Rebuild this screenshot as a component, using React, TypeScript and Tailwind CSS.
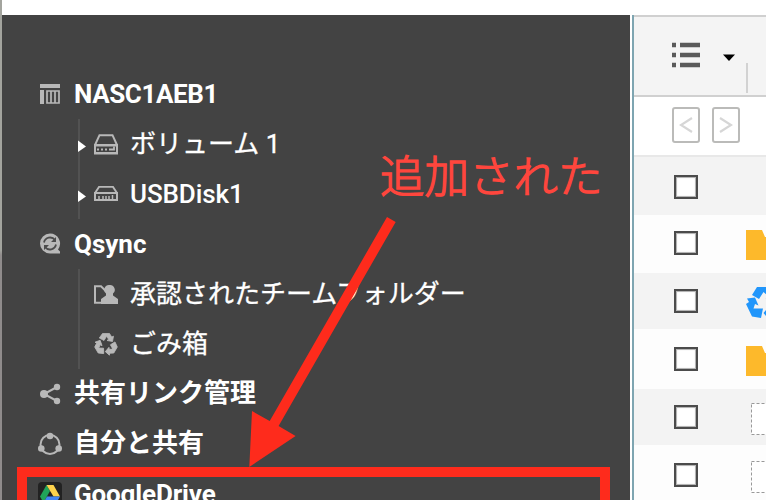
import type { ReactNode } from "react";

const ICON = "#b8b8b8";

function NasIcon() {
  return (
    <svg width="24" height="24" viewBox="0 0 24 24" fill="none">
      <path d="M2 2h20v4H2zM2 8h4v14H2z" fill={ICON} />
      <path d="M9 9h12v12H9zM13 9v12M17 9v12" stroke={ICON} strokeWidth="1.700" />
    </svg>
  );
}

function DriveIcon() {
  return (
    <svg width="24" height="24" viewBox="0 0 24 24" fill="none">
      <path d="M1 13L5.500 3.200h13L23 13" stroke={ICON} strokeWidth="2" />
      <path fillRule="evenodd" d="M0 12h24v10.500H0zM2 14.500v5.500h20v-5.500z" fill={ICON} />
      <path d="M3 17.500h2M7 17.500h2M11 17.500h2M15 17.500h5v-3" stroke={ICON} strokeWidth="1.800" />
    </svg>
  );
}

function UsbIcon() {
  return (
    <svg width="24" height="24" viewBox="0 0 24 24" fill="none">
      <path d="M1 11L5 4.900h14L23 11" stroke={ICON} strokeWidth="1.900" />
      <path d="M1 10.900h22v7.200H1z" stroke={ICON} strokeWidth="2" />
      <path d="M5 17v-3M9 17v-3M12 17v-3M15 17v-3M18.500 17v-4" stroke={ICON} strokeWidth="1.500" />
    </svg>
  );
}

function QsyncIcon() {
  return (
    <svg width="24" height="24" viewBox="0 0 24 24" fill="none">
      <path d="M12 1.500a10 10 0 1 0 0 20h10v-2l-2-2A10 10 0 0 0 12 1.500z" fill={ICON} />
      <path d="M6 10.500a6.200 6.200 0 0 1 11-2.500M18 12.500a6.200 6.200 0 0 1-11 2.500" stroke="#4c4c4c" strokeWidth="1.800" />
      <path d="M18 5v5h-5zM6 18v-5h5z" fill="#4c4c4c" />
    </svg>
  );
}

function TeamIcon() {
  return (
    <svg width="24" height="24" viewBox="0 0 24 24" fill="none">
      <path d="M9 20.700H1V4.200h6l5 5" stroke={ICON} strokeWidth="2" />
      <path d="M15.500 3a4.800 4.800 0 0 1 3.500 8.500v2l5 3.500v5H7v-5l5-3.500v-2A4.800 4.800 0 0 1 15.500 3z" fill={ICON} />
    </svg>
  );
}

function RecycleIcon() {
  return (
    <svg width="24" height="24" viewBox="0 0 24 24" fill={ICON} stroke={ICON} strokeWidth="0.8">
      <path id="recycle-arm" d="M8.500 1.500h7l2.200 3.500 1.800-.8L18.500 9.500 13 8.500l1.600-1.200-2-3L10 8.500 5.300 6z" />
      <use href="#recycle-arm" transform="rotate(120 12 12.500)" />
      <use href="#recycle-arm" transform="rotate(240 12 12.500)" />
    </svg>
  );
}

function BlueRecycle() {
  return (
    <svg width="36" height="34" viewBox="0 0 36 34" fill="#2196fb" className="mt-3.5 ml-12 shrink-0">
      <path d="M11 0h13l4 6 3-1.500-2.500 9-9-2 3-2-5-4.500-4.500 7L6 8z" />
      <path d="M1 11.500l8-1 3.500 8-3.500-1.500-1.500 4.500H17L15 31 6 29.500 0 17l3-2z" />
      <path d="M17.500 26l6-7v3h4l-3-6 7-4 4 8-5 9.500h-7V33z" />
    </svg>
  );
}

function ShareIcon() {
  return (
    <svg width="24" height="24" viewBox="0 0 24 24" fill={ICON}>
      <path d="M19 5L6 12l13 7" stroke={ICON} strokeWidth="2" fill="none" />
      <circle cx="6" cy="12" r="4" />
      <circle cx="19" cy="5" r="3.200" />
      <circle cx="19" cy="19" r="3.200" />
    </svg>
  );
}

function SharedWithIcon() {
  return (
    <svg width="24" height="24" viewBox="0 0 24 24" fill={ICON}>
      <circle cx="12" cy="12.500" r="9.500" stroke={ICON} strokeWidth="2" fill="none" />
      <circle cx="12" cy="4" r="3.300" />
      <circle cx="3.300" cy="16.500" r="3.300" />
      <circle cx="20.700" cy="16.500" r="3.300" />
    </svg>
  );
}

function GoogleDriveIcon() {
  return (
    <svg width="24" height="24" viewBox="0 0 24 24">
      <rect width="24" height="24" rx="4" fill="#222" />
      <path d="M8.500 3L2 14.500l3.500 6L12 9z" fill="#20a45a" />
      <path d="M8.500 3h7L22 14.500h-6.500z" fill="#fdd24c" />
      <path d="M9 14.500h13l-3.500 6h-13z" fill="#4285f4" />
    </svg>
  );
}

function RootRow({ icon, label, text }: { icon: ReactNode; label: string; text: string }) {
  return (
    <li className="flex h-[50px] items-center gap-3 pl-9">
      <span className="shrink-0">{icon}</span>
      <span className={`font-bold whitespace-nowrap ${text}`}>{label}</span>
    </li>
  );
}

function ChildRow({ icon, label, text, arrow }: { icon: ReactNode; label: string; text: string; arrow?: boolean }) {
  return (
    <li className="ml-[76px] flex h-[50px] items-center border-l-2 border-[#525252]">
      <svg width="8" height="12" viewBox="0 0 8 12" className="mt-1 mr-2 -ml-0.5 shrink-0">
        {arrow && <path d="M0 0.500l8 6-8 5.500z" fill="#fff" />}
      </svg>
      <span className="mr-3 shrink-0">{icon}</span>
      <span className={`whitespace-nowrap ${text}`}>{label}</span>
    </li>
  );
}

function FileRow({ className, pad, children }: { className: string; pad: string; children?: ReactNode }) {
  return (
    <div className={`flex items-start overflow-hidden pl-10 ${className}`}>
      <span className={`shrink-0 ${pad}`}>
        <span className="block size-6 border-2 border-[#4b4b4b] bg-white shadow-[inset_0_0_0_1px_#b5b5b5,inset_0_0_2px_#999]" />
      </span>
      {children}
    </div>
  );
}

function Folder() {
  return (
    <svg width="36" height="30" viewBox="0 0 36 30" className="mt-[15px] ml-12 shrink-0">
      <path d="M0 0h16l3 7h17v23H0z" fill="#fdb92b" />
    </svg>
  );
}

function FilePlaceholder() {
  return (
    <svg width="32" height="32" viewBox="0 0 32 32" className="mt-3.5 ml-[53px] shrink-0">
      <rect x="0.5" y="0.5" width="31" height="31" fill="#fff" stroke="#999" strokeDasharray="3 2" />
    </svg>
  );
}

function NavButton({ d }: { d: string }) {
  return (
    <span className="flex h-9 w-7 items-center justify-center rounded-[3px] border-2 border-[#bbbbb9] bg-white">
      <svg width="14" height="18" viewBox="0 0 14 18" fill="none">
        <path d={d} stroke="#d6d6d6" strokeWidth="2.200" />
      </svg>
    </span>
  );
}

export default function App() {
  return (
    <div className="relative flex h-[500px] w-[766px] overflow-hidden bg-white font-[Roboto,'Noto_Sans_CJK_JP',sans-serif] text-[26px] leading-none text-white">
      <div className="w-0.5 shrink-0 bg-linear-to-b from-[#a3a49e] from-50% to-[#908c8c] to-51%" />

      <aside className="mt-[15px] w-[628px] shrink-0 overflow-hidden bg-[#434343] pt-[54px]">
        <ul>
          <RootRow icon={<NasIcon />} label="NASC1AEB1" text="tracking-[-0.4px]" />
          <ChildRow arrow icon={<DriveIcon />} label="ボリューム 1" text="[-webkit-text-stroke:0.3px_#fff]" />
          <ChildRow arrow icon={<UsbIcon />} label="USBDisk1" text="font-medium tracking-[-0.1px]" />
          <RootRow icon={<QsyncIcon />} label="Qsync" text="" />
          <ChildRow icon={<TeamIcon />} label="承認されたチームフォルダー" text="[-webkit-text-stroke:0.3px_#fff]" />
          <ChildRow icon={<RecycleIcon />} label="ごみ箱" text="[-webkit-text-stroke:0.3px_#fff]" />
          <RootRow icon={<ShareIcon />} label="共有リンク管理" text="pb-0.5" />
          <RootRow icon={<SharedWithIcon />} label="自分と共有" text="pb-0.5" />
          <RootRow icon={<GoogleDriveIcon />} label="GoogleDrive" text="tracking-[-0.15px]" />
        </ul>
      </aside>

      <main className="mt-[15px] ml-0.5 flex w-[134px] shrink-0 flex-col overflow-hidden border-l-2 border-[#7ea5b1]">
        <div className="flex h-[82px] shrink-0 items-start border-y-2 border-[#d0d0d0] bg-[#f4f4f4] pl-[38px]">
          <svg width="28" height="26" viewBox="0 0 28 26" fill="#5a5a5a" className="mt-[25px] shrink-0">
            <path d="M0 .8h4v4.400H0zM8 .8h20v4.400H8zM0 10.800h4v4.400H0zM8 10.800h20v4.400H8zM0 20.800h4v4.400H0zM8 20.800h20v4.400H8z" />
          </svg>
          <svg width="12" height="7" viewBox="0 0 12 7" className="mt-[37px] ml-[23px] shrink-0">
            <path d="M0 0.500h12L6 7z" fill="#000" />
          </svg>
          <span className="mt-[46px] ml-[11px] h-[30px] w-0.5 shrink-0 bg-[#d2d2d2]" />
        </div>
        <div className="flex h-[60px] shrink-0 gap-3 border-b-2 border-[#e8e8e8] bg-white pt-2.5 pl-[38px]">
          <NavButton d="M13 2L2 9l11 7" />
          <NavButton d="M1 2l11 7-11 7" />
        </div>
        <FileRow className="h-[58px] shrink-0 bg-[#f3f3f3]" pad="pt-[18px]" />
        <FileRow className="h-[58px] shrink-0 bg-[#fdfdfd]" pad="pt-4"><Folder /></FileRow>
        <FileRow className="h-14 shrink-0 bg-[#f3f3f3]" pad="pt-4"><BlueRecycle /></FileRow>
        <FileRow className="h-[60px] shrink-0 bg-[#fdfdfd]" pad="pt-[18px]">
          <span className="pt-0.5"><Folder /></span>
        </FileRow>
        <FileRow className="h-14 shrink-0 bg-[#f3f3f3]" pad="pt-4"><FilePlaceholder /></FileRow>
        <FileRow className="h-[55px] shrink-0 bg-[#fdfdfd]" pad="pt-[18px]">
          <span className="pt-0.5"><FilePlaceholder /></span>
        </FileRow>
      </main>

      <div className="absolute top-[467px] left-[17px] h-[50px] w-[593px] border-[10px] border-[#fe2b1c]" />
      <svg className="absolute top-[210px] left-[240px]" width="170" height="260" viewBox="240 210 170 260">
        <path d="M387 217l8.700 5L278.600 426l17 10L249.300 467 252 411l17.700 10z" fill="#fe2b1c" />
      </svg>
      <div className="absolute top-[152px] left-[380px] font-['Noto_Sans_CJK_JP',sans-serif] text-[44.5px] font-light whitespace-nowrap text-[#ff463d] [-webkit-text-stroke:1.3px_#ff463d]">
        追加された
      </div>
    </div>
  );
}
